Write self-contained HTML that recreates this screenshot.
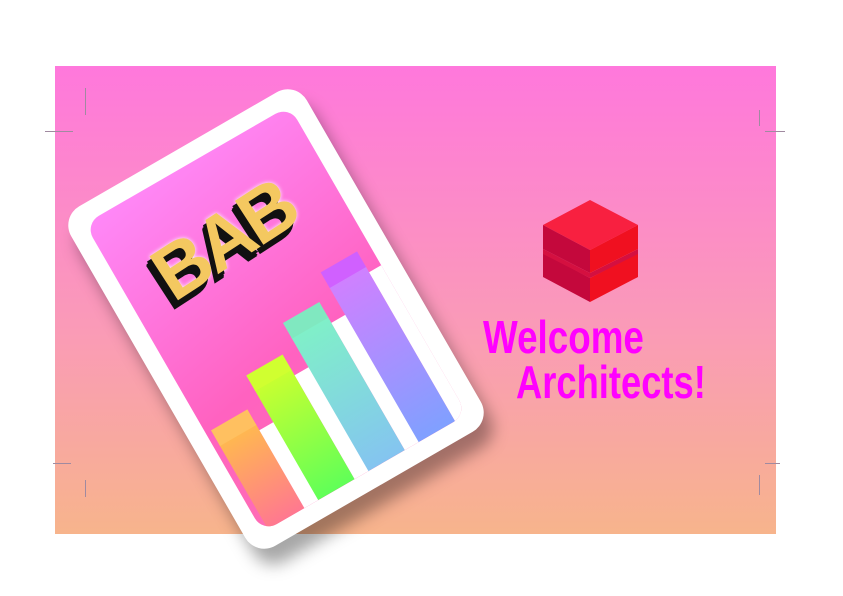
<!DOCTYPE html>
<html><head><meta charset="utf-8"><style>
body{margin:0;width:843px;height:596px;background:#fff;position:relative;overflow:hidden;font-family:"Liberation Sans",sans-serif}
.bg{position:absolute;left:55px;top:66px;width:721px;height:468px;background:linear-gradient(#ff78dc,#fa9ab8 55%,#f7b48c)}
.m{position:absolute;background:#a08aa0}
.card{position:absolute;left:140px;top:123px;width:272px;height:392px;background:#fff;border-radius:22px;transform:rotate(-30deg);box-shadow:0 18px 16px rgba(0,0,0,.35)}
.panel{position:absolute;left:18px;top:18px;width:236px;height:356px;border-radius:16px;background:linear-gradient(170deg,#ff88f8,#ff62c0 60%,#ff70b0);overflow:hidden}
.bar{position:absolute;bottom:0;width:42px}
.wh{position:absolute;bottom:0;width:18px;background:#fff}
.cap{position:absolute;width:42px;height:18px}
.bab{position:absolute;left:36px;top:40px;font:bold 76px "Liberation Sans",sans-serif;letter-spacing:-4px;color:#f4c860;transform:rotate(-3deg);text-shadow:-5px 3px 0 #111,-7px 5px 0 #111,-8px 6px 0 #111,0 0 4px #fff}
.t{position:absolute;color:#ff00ff;font-family:"Liberation Sans Narrow","Liberation Sans",sans-serif;font-weight:bold;font-size:46px;line-height:46px;transform-origin:0 0}
</style></head><body>
<div class="bg"></div>
<div class="m" style="left:85px;top:88px;width:1px;height:27px"></div>
<div class="m" style="left:45px;top:131px;width:28px;height:1px"></div>
<div class="m" style="left:759px;top:110px;width:1px;height:16px"></div>
<div class="m" style="left:765px;top:131px;width:20px;height:1px"></div>
<div class="m" style="left:53px;top:463px;width:18px;height:1px"></div>
<div class="m" style="left:85px;top:480px;width:1px;height:17px"></div>
<div class="m" style="left:765px;top:463px;width:15px;height:1px"></div>
<div class="m" style="left:759px;top:475px;width:1px;height:20px"></div>

<div class="card"><div class="panel">
 <div class="bab">BAB</div>
 <div class="bar" style="left:6px;top:258px;background:linear-gradient(#ffb850,#ff7890)"></div>
 <div class="wh" style="left:48px;top:266px"></div>
 <div class="cap" style="left:6px;top:242px;background:#ffc060"></div>
 <div class="bar" style="left:64px;top:228px;background:linear-gradient(#c8ff30,#60ff58)"></div>
 <div class="wh" style="left:106px;top:236px"></div>
 <div class="cap" style="left:64px;top:212px;background:#d0ff30"></div>
 <div class="bar" style="left:122px;top:201px;background:linear-gradient(#80f0c8,#84c4f0)"></div>
 <div class="wh" style="left:164px;top:209px"></div>
 <div class="cap" style="left:122px;top:185px;background:#80e8c0"></div>
 <div class="bar" style="left:180px;top:176px;background:linear-gradient(#d080ff,#80a0ff)"></div>
 <div class="wh" style="left:222px;top:184px"></div>
 <div class="cap" style="left:180px;top:160px;background:#d060ff"></div>
</div></div>

<svg style="position:absolute;left:0;top:0" width="843" height="596">
 <polygon points="543,253 590,278 590,302 543,277" fill="#c4083c"/>
 <polygon points="590,278 638,253 638,277 590,302" fill="#f01020"/>
 <polygon points="543,249 590,273 638,249 638,254 590,278 543,254" fill="#d41040"/>
 <polygon points="590,200 638,225 590,250 543,225" fill="#f82040"/>
 <polygon points="543,225 590,250 590,273 543,249" fill="#c4083c"/>
 <polygon points="590,250 638,225 638,249 590,273" fill="#f01020"/>
</svg>
<div class="t" style="left:483px;top:314px;transform:scaleX(0.8)">Welcome</div>
<div class="t" style="left:516px;top:359px;transform:scaleX(0.79)">Architects!</div>
</body></html>
